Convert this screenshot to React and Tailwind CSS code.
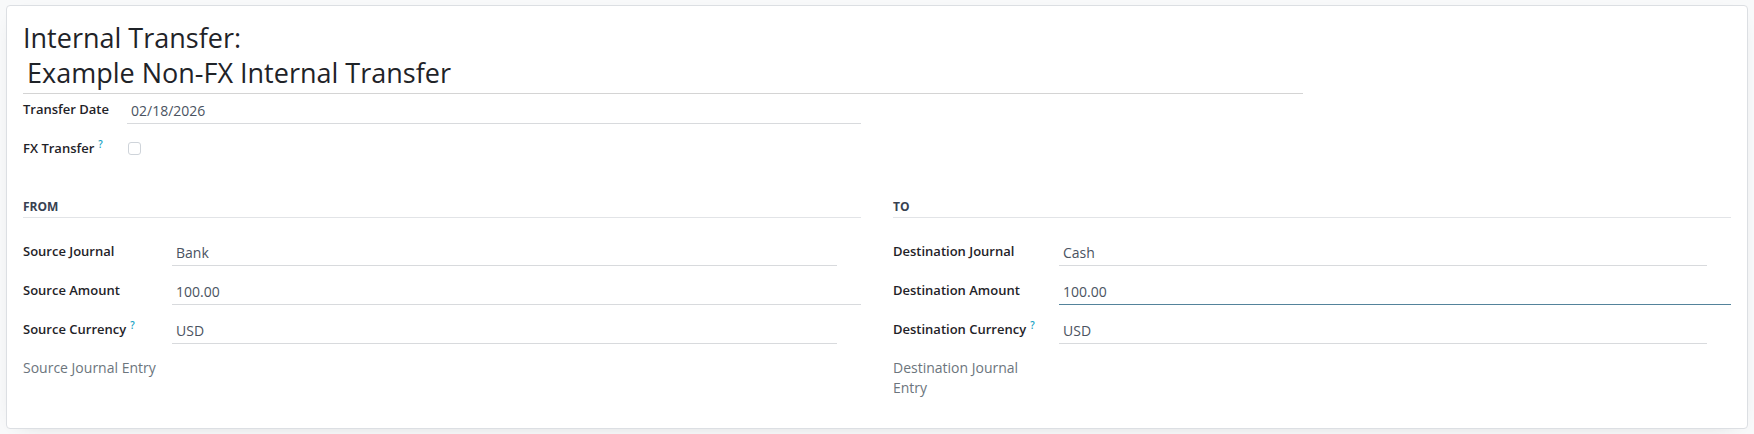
import React from "react";

const font = { fontFamily: '"Open Sans", "Noto Sans", sans-serif' };

function Help() {
  return <sup className="pl-1 text-[#17a2c4]">?</sup>;
}

function Row({ label, labelW, value, short, focused, muted, help, children }) {
  return (
    <div className="flex items-start min-h-[25px]">
      <div
        className={
          "shrink-0 leading-5 " +
          (muted ? "text-[14px] text-[#6c757d]" : "text-[13px] font-semibold text-[#1f2328]")
        }
        style={{ width: labelW }}
      >
        {label}
        {help && <Help />}
      </div>
      {children}
      {value !== undefined && (
        <div
          className={
            "flex-1 pl-1 pt-[2px] pb-[2px] border-b text-[14px] leading-5 text-[#4a5361] " +
            (focused ? "border-[#53839b]" : "border-[#d8dadd]") +
            (short ? " mr-[24px]" : "")
          }
        >
          {value}
        </div>
      )}
    </div>
  );
}

function Section({ title, labelW, rows }) {
  return (
    <div className="flex flex-col">
      <div className="pb-[2px] border-b border-[#e2e4e7] text-[12px] leading-4 font-bold uppercase text-[#374151]">
        {title}
      </div>
      <div className="mt-[23px] flex flex-col gap-[14px]">
        {rows.map((r, i) => (
          <Row key={i} labelW={labelW} {...r} />
        ))}
      </div>
    </div>
  );
}

export default function App() {
  return (
    <div className="min-h-screen bg-[#f8f9fa] px-[6px] py-[5px]" style={font}>
      <div className="h-[424px] bg-white border border-[#dcdfe3] rounded-[4px] shadow-[0_5px_20px_-15px_rgba(0,0,0,0.3)] px-4 pt-[14px]">
        {/* title */}
        <div className="w-[1280px] text-[27px] leading-[35px] text-[#1f2328]">
          <div>Internal Transfer:</div>
          <div className="pl-1 pb-[3px] border-b border-[#d4d4d4]">Example Non-FX Internal Transfer</div>
        </div>

        <div className="mt-[5px] w-[838px] flex flex-col gap-[14px]">
          <Row label="Transfer Date" labelW={104} value="02/18/2026" />
          <Row label="FX Transfer" labelW={104} help>
            <div className="mt-[4px] ml-px w-[13px] h-[13px] rounded-[3px] border border-[#cfd4da] bg-white" />
          </Row>
        </div>

        <div className="mt-[36px] grid grid-cols-2 gap-x-8">
          <Section
            title="From"
            labelW={149}
            rows={[
              { label: "Source Journal", value: "Bank", short: true },
              { label: "Source Amount", value: "100.00" },
              { label: "Source Currency", value: "USD", short: true, help: true },
              { label: "Source Journal Entry", muted: true },
            ]}
          />
          <Section
            title="To"
            labelW={166}
            rows={[
              { label: "Destination Journal", value: "Cash", short: true },
              { label: "Destination Amount", value: "100.00", focused: true },
              { label: "Destination Currency", value: "USD", short: true, help: true },
              {
                label: (
                  <>
                    Destination Journal
                    <br />
                    Entry
                  </>
                ),
                muted: true,
              },
            ]}
          />
        </div>
      </div>
    </div>
  );
}
